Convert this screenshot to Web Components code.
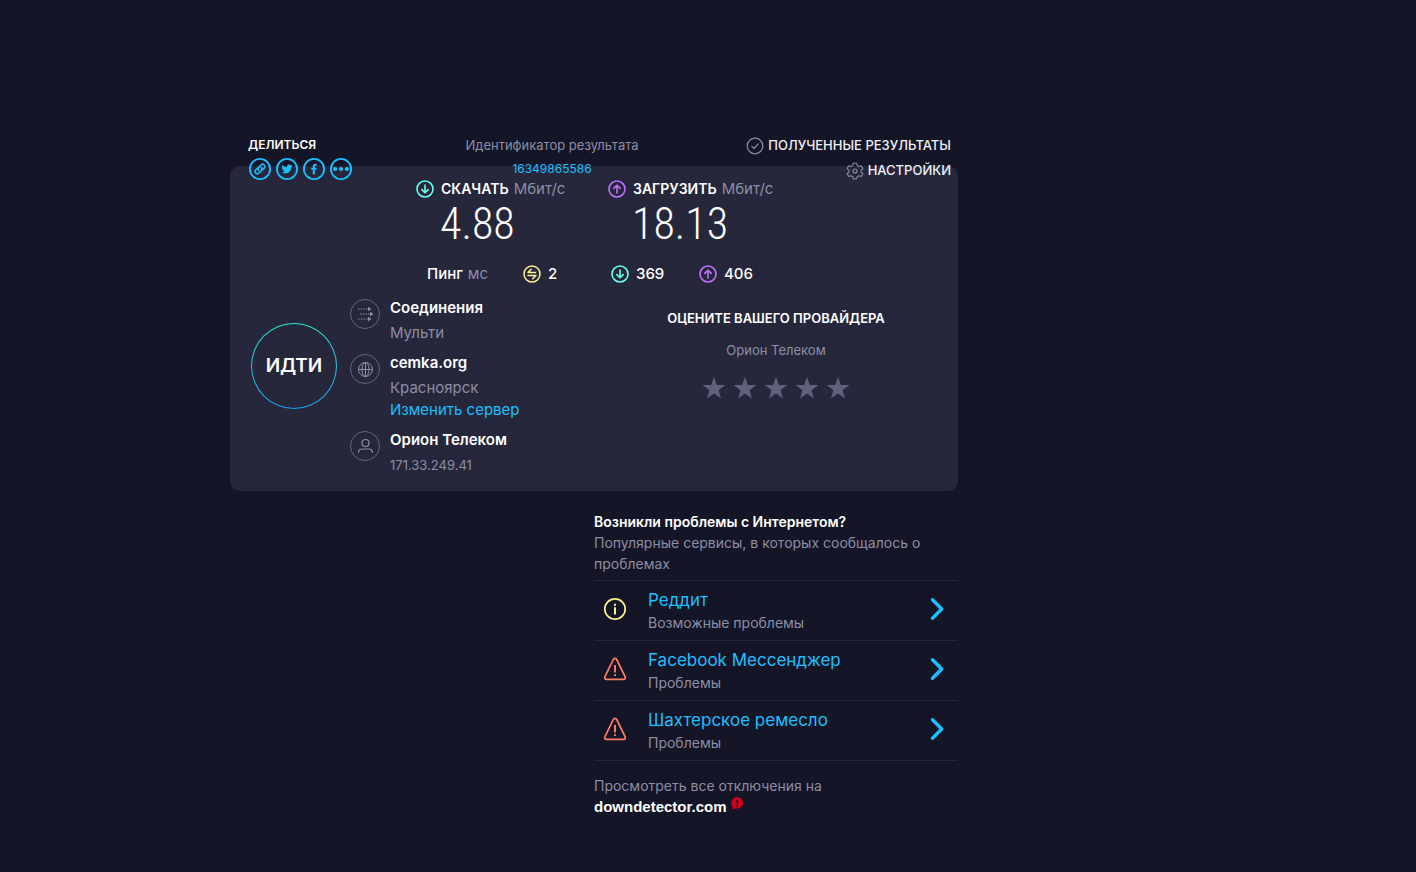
<!DOCTYPE html>
<html lang="ru">
<head>
<meta charset="utf-8">
<meta name="viewport" content="width=device-width, initial-scale=1">
<title>Speedtest</title>
<style>
  body {
    margin: 0;
    min-height: 100vh;
    background: #141526;
    color: #fff;
    font-family: Inter, "Open Sans", sans-serif;
    --card: #26273b;
    --muted: #8c8ea5;
    --link: #1cbfff;
    --down: #6afff3;
    --up: #bf71ff;
    --ping: #fff38e;
    --alert: #ff7e67;
  }
</style>
</head>
<body>
<speed-page></speed-page>

<script>
const ICONS = {
  link: ['0 0 24 24', '<g fill="none" stroke="currentColor"><circle cx="12" cy="12" r="11" stroke-width="2"/><g stroke-width="1.7" stroke-linecap="round"><path d="M10.6 13.6a2.4 2.4 0 0 1 0-3.4l2.5-2.6a2.4 2.4 0 0 1 3.5 3.4l-1.7 1.8"/><path d="M13.4 10.4a2.4 2.4 0 0 1 0 3.4l-2.5 2.6a2.4 2.4 0 0 1-3.5-3.4l1.7-1.8"/></g></g>'],
  twitter: ['0 0 24 24', '<circle cx="12" cy="12" r="11" fill="none" stroke="currentColor" stroke-width="2"/><path fill="currentColor" d="M18 8.2c-.5.2-.9.3-1.4.4.5-.3.9-.8 1.1-1.4-.5.3-1 .5-1.6.6a2.5 2.5 0 0 0-4.2 2.2c-2-.1-3.9-1.1-5.1-2.6-.6 1.100-.3 2.600.8 3.300-.4 0-.8-.1-1.100-.3 0 1.200.8 2.200 2 2.500-.4.1-.7.1-1.100 0 .3 1 1.200 1.700 2.300 1.700A5 5 0 0 1 6 15.700c4.800 2.900 10.900-.1 10.800-6.200.5-.4.9-.8 1.200-1.300z"/>'],
  facebook: ['0 0 24 24', '<circle cx="12" cy="12" r="11" fill="none" stroke="currentColor" stroke-width="2"/><path fill="currentColor" d="M10.700 18v-5.200H9v-2.100h1.700V9.200c0-1.900 1-2.800 2.700-2.800l1.500.1v1.900h-1c-.8 0-1 .4-1 1v1.300h2l-.3 2.100h-1.700V18z"/>'],
  more: ['0 0 24 24', '<circle cx="12" cy="12" r="11" fill="none" stroke="currentColor" stroke-width="2"/><g fill="currentColor"><circle cx="5.600" cy="12" r="2.300"/><circle cx="12" cy="12" r="2.300"/><circle cx="18.400" cy="12" r="2.300"/></g>'],
  check: ['0 0 18 18', '<g fill="none" stroke="currentColor" stroke-width="1.200"><circle cx="9" cy="9" r="7.800"/><path stroke-linecap="round" stroke-linejoin="round" d="M5.800 9.300l2.200 2.200 4.200-4.700"/></g>'],
  gear: ['0 0 18 18', '<g fill="none" stroke="currentColor" stroke-width="1.100" stroke-linejoin="round"><path d="M7.300 1.200h3.400l.5 2.300 1.700 1 2.300-.8 1.700 2.900-1.800 1.600v1.900l1.800 1.500-1.700 2.900-2.300-.7-1.700 1-.5 2.200H7.300l-.5-2.200-1.700-1-2.300.7-1.700-2.900 1.800-1.500V8.200L1.100 6.600l1.700-2.900 2.300.8 1.700-1z"/><circle cx="9" cy="9" r="2"/></g>'],
  down: ['0 0 18 18', '<g fill="none" stroke="currentColor" stroke-width="1.600"><circle cx="9" cy="9" r="8"/><path stroke-linecap="round" stroke-linejoin="round" d="M9 5v7.600M5.800 9.600L9 12.800l3.200-3.200"/></g>'],
  up: ['0 0 18 18', '<g fill="none" stroke="currentColor" stroke-width="1.600"><circle cx="9" cy="9" r="8"/><path stroke-linecap="round" stroke-linejoin="round" d="M9 13V5.400M5.800 8.400L9 5.200l3.200 3.200"/></g>'],
  ping: ['0 0 18 18', '<g fill="none" stroke="currentColor" stroke-width="1.500"><circle cx="9" cy="9" r="8"/><path stroke-linejoin="round" stroke-linecap="round" d="M8.200 4.300L5 7.400h7.500M5 10.400h8l-3.300 3.300"/></g>'],
  multi: ['0 0 30 30', '<g fill="none" stroke="currentColor"><circle cx="15" cy="15" r="14.500" opacity=".6"/><path stroke-width="1.200" stroke-dasharray="1.500 1.200" d="M8 10h11M10 15h11M8 20h11"/></g><g fill="currentColor"><path d="M18 7.700l3.500 2.300-3.500 2.300zM20 12.700l3.500 2.300-3.500 2.300zM18 17.700l3.500 2.300-3.500 2.300z"/></g>'],
  globe: ['0 0 30 30', '<g fill="none" stroke="currentColor"><circle cx="15" cy="15" r="14.500" opacity=".6"/><circle cx="15.500" cy="15.500" r="7"/><ellipse cx="15.500" cy="15.500" rx="3.500" ry="7"/><path d="M8.500 15.500h14M15.500 8.500v14"/></g>'],
  person: ['0 0 30 30', '<g fill="none" stroke="currentColor"><circle cx="15" cy="15" r="14.500" opacity=".6"/><g stroke-width="1.200" stroke-linecap="round"><circle cx="15.500" cy="12" r="3.500"/><path d="M8.500 21.500c0-2.500 1.500-3.500 4-3.500h6c2.500 0 4 1 4 3.500"/></g></g>'],
  star: ['0 0 24 24', '<path fill="currentColor" d="M12 .8l2.800 8.100 8.600.2-6.800 5.200 2.400 8.200-7-4.900-7 4.900 2.400-8.200L.6 9.100l8.600-.2z"/>'],
  info: ['0 0 24 24', '<circle cx="12" cy="12" r="10.200" fill="none" stroke="currentColor" stroke-width="1.700"/><path fill="none" stroke="currentColor" stroke-width="2" d="M12 10.300V17.500M12 6.700v2"/>'],
  warn: ['0 0 24 24', '<path fill="none" stroke="currentColor" stroke-width="1.700" stroke-linejoin="round" d="M10.300 2.500a1.900 1.900 0 0 1 3.400 0l8.500 17.400a1.700 1.700 0 0 1-1.500 2.400H3.300a1.700 1.700 0 0 1-1.500-2.400z"/><path fill="none" stroke="currentColor" stroke-width="1.900" d="M12 8v7.500M12 17.200v1.900"/>'],
  chevron: ['0 0 24 24', '<path fill="none" stroke="currentColor" stroke-width="3.400" stroke-linecap="round" stroke-linejoin="round" d="M7.500 2.700L16.700 12 7.500 21.300"/>'],
  badge: ['0 0 14 14', '<path fill="#d0021b" d="M7 1a6 5.800 0 1 1-1.500 11.400L1.800 13.300l.9-2.600A5.900 5.900 0 0 1 7 1z"/><path fill="none" stroke="#141526" stroke-width="1.800" d="M7.200 3v4.700M7.200 9v1.800"/>']
};

const define = (name, css, html) => customElements.define(name, class extends HTMLElement {
  constructor() {
    super();
    const template = document.createElement('template');
    template.innerHTML = `<style>*{box-sizing:border-box}${css}</style>${typeof html === 'function' ? html(this) : html}`;
    this.attachShadow({ mode: 'open' }).append(template.content.cloneNode(true));
  }
});

customElements.define('ui-icon', class extends HTMLElement {
  connectedCallback() {
    if (this.shadowRoot) return;
    const [box, body] = ICONS[this.getAttribute('name')];
    this.attachShadow({ mode: 'open' }).innerHTML = `
      <style>:host{display:block;flex:none;width:var(--size,18px);height:var(--size,18px)}svg{display:block;width:100%;height:100%}</style>
      <svg viewBox="${box}" aria-hidden="true">${body}</svg>`;
  }
});

define('share-bar', `
  :host { display: block; }
  h2 { margin: 0; font-size: 12px; line-height: 24px; font-weight: 600; }
  div { display: flex; gap: 3px; }
  button { display: grid; place-items: center; width: 24px; height: 24px; padding: 0; border: 0; background: none; color: var(--link); --size: 22px; cursor: pointer; }
`, `<h2>ДЕЛИТЬСЯ</h2>
  <div>
    <button aria-label="Копировать ссылку"><ui-icon name="link"></ui-icon></button>
    <button aria-label="Twitter"><ui-icon name="twitter"></ui-icon></button>
    <button aria-label="Facebook"><ui-icon name="facebook"></ui-icon></button>
    <button aria-label="Ещё"><ui-icon name="more"></ui-icon></button>
  </div>`);

define('result-id', `
  :host { display: block; text-align: center; line-height: 24px; }
  span, a { display: block; }
  span { font-size: 13px; color: var(--muted); }
  a { font-size: 12px; color: var(--link); text-decoration: none; }
`, `<span>Идентификатор результата</span><a href="#result"><slot></slot></a>`);

define('top-links', `
  :host { display: grid; justify-items: end; }
  a { display: flex; align-items: center; gap: 4px; font-size: 13px; line-height: 25px; font-weight: 500; color: #f0f0f6; text-decoration: none; white-space: nowrap; }
  ui-icon { color: var(--muted); }
`, `<a href="#results"><ui-icon name="check"></ui-icon>ПОЛУЧЕННЫЕ РЕЗУЛЬТАТЫ</a>
  <a href="#settings"><ui-icon name="gear"></ui-icon>НАСТРОЙКИ</a>`);

define('speed-value', `
  :host { display: block; }
  h3 { display: flex; align-items: center; margin: 0; font-size: 14px; line-height: 24px; font-weight: 600; white-space: nowrap; }
  ui-icon { margin-right: 7px; color: var(--tone); }
  small { margin-left: 5px; font-size: 15px; font-weight: 400; color: var(--muted); }
  p { margin: 0 0 0 24px; font: 300 44px/46px "Roboto Condensed", Roboto, sans-serif; }
`, host => `<h3><ui-icon name="${host.getAttribute('icon')}"></ui-icon><slot name="label"></slot><small>Мбит/с</small></h3><p><slot></slot></p>`);

define('ping-row', `
  :host { display: grid; grid-template-columns: 96px 88px 88px 88px; align-items: center; font-size: 15px; line-height: 24px; font-weight: 500; }
  span { display: flex; align-items: center; gap: 7px; }
  .label { gap: 5px; }
  small { font-size: 15px; font-weight: 400; color: var(--muted); }
  .ping ui-icon { color: var(--ping); }
  .down ui-icon { color: var(--down); }
  .up ui-icon { color: var(--up); }
`, `<span class="label">Пинг <small>мс</small></span>
  <span class="ping"><ui-icon name="ping"></ui-icon>2</span>
  <span class="down"><ui-icon name="down"></ui-icon>369</span>
  <span class="up"><ui-icon name="up"></ui-icon>406</span>`);

define('go-button', `
  :host { display: block; }
  button { width: 86px; height: 86px; padding: 0; border: 1px solid transparent; border-radius: 50%; color: #fff; font: 600 19px/24px Inter, sans-serif; cursor: pointer;
    background: linear-gradient(var(--card), var(--card)) padding-box, linear-gradient(#2ee6c8, #1ca0f0) border-box; }
`, `<button><slot></slot></button>`);

define('connection-item', `
  :host { display: grid; grid-template-columns: 30px 1fr; column-gap: 10px; font-size: 15px; line-height: 22px; color: var(--muted); }
  h3 { margin: 0; font-size: 15px; line-height: 28px; font-weight: 600; color: #fff; }
  ::slotted(*) { display: block; }
`, `<slot name="icon"></slot><div><h3><slot name="title"></slot></h3><slot></slot></div>`);

define('connection-list', `
  :host { display: grid; gap: 5px; }
  connection-item ui-icon { --size: 30px; margin-top: 5px; color: var(--muted); }
  a { color: var(--link); text-decoration: none; }
  .ip { font-size: 13px; }
`, `
  <connection-item><ui-icon slot="icon" name="multi"></ui-icon><span slot="title">Соединения</span><span>Мульти</span></connection-item>
  <connection-item><ui-icon slot="icon" name="globe"></ui-icon><span slot="title">cemka.org</span><span>Красноярск</span><a href="#servers">Изменить сервер</a></connection-item>
  <connection-item><ui-icon slot="icon" name="person"></ui-icon><span slot="title">Орион Телеком</span><span class="ip">171.33.249.41</span></connection-item>`);

define('provider-rating', `
  :host { display: block; padding-top: 12px; text-align: center; font-size: 13px; }
  h3 { margin: 0; font-size: 13px; line-height: 24px; font-weight: 600; }
  p { margin: 8px 0 14px; line-height: 24px; color: var(--muted); }
  div { display: flex; justify-content: center; gap: 7px; }
  button { padding: 0; border: 0; background: none; color: #5f6179; --size: 24px; cursor: pointer; }
`, `<h3>ОЦЕНИТЕ ВАШЕГО ПРОВАЙДЕРА</h3><p><slot></slot></p>
  <div>${[1, 2, 3, 4, 5].map(n => `<button aria-label="Оценка ${n}"><ui-icon name="star"></ui-icon></button>`).join('')}</div>`);

define('result-card', `
  :host { display: block; padding: 11px 0 15px; border-radius: 10px; background: var(--card); }
  .speeds { display: grid; grid-template-columns: 192px 192px; padding-left: 186px; }
  .down { --tone: var(--down); }
  .up { --tone: var(--up); }
  ping-row { margin: 15px 0 8px 197px; }
  .body { display: grid; grid-template-columns: 1fr 1fr; }
  .left { display: grid; grid-template-columns: 86px 1fr; gap: 13px; padding-left: 21px; }
  go-button { margin-top: 29px; }
`, `<div class="speeds">
    <speed-value class="down" icon="down"><span slot="label">СКАЧАТЬ</span>4.88</speed-value>
    <speed-value class="up" icon="up"><span slot="label">ЗАГРУЗИТЬ</span>18.13</speed-value>
  </div>
  <ping-row></ping-row>
  <div class="body">
    <div class="left"><go-button>ИДТИ</go-button><connection-list></connection-list></div>
    <provider-rating>Орион Телеком</provider-rating>
  </div>`);

define('outage-item', `
  :host { display: grid; grid-template-columns: 54px 1fr 24px; align-items: start; padding: 7px 9px 6px 0; border-top: 1px solid var(--card); }
  ui-icon { --size: 24px; margin-top: 9px; }
  .state { margin-left: 9px; color: var(--tone); }
  a { display: block; font-size: 17px; line-height: 24px; color: var(--link); text-decoration: none; }
  small { display: block; font-size: 14px; line-height: 22px; color: var(--muted); }
  .go { color: var(--link); }
`, host => `<ui-icon class="state" name="${host.getAttribute('icon')}"></ui-icon>
  <div><a href="#status"><slot></slot></a><small><slot name="state"></slot></small></div>
  <ui-icon class="go" name="chevron"></ui-icon>`);

define('outage-panel', `
  :host { display: block; font-size: 14px; line-height: 21px; color: var(--muted); }
  h2 { margin: 0; font-size: 14px; line-height: 21px; font-weight: 600; color: #fff; }
  p { margin: 0; }
  .list { margin: 6px 0 14px; border-bottom: 1px solid var(--card); }
  .info { --tone: var(--ping); }
  .warn { --tone: var(--alert); }
  a { display: flex; align-items: center; gap: 3px; color: #fff; font: 700 15px/21px "Liberation Sans", Arial, sans-serif; text-decoration: none; }
  a ui-icon { --size: 14px; align-self: start; }
`, `<h2>Возникли проблемы с Интернетом?</h2>
  <p>Популярные сервисы, в которых сообщалось о проблемах</p>
  <div class="list">
    <outage-item class="info" icon="info">Реддит<span slot="state">Возможные проблемы</span></outage-item>
    <outage-item class="warn" icon="warn">Facebook Мессенджер<span slot="state">Проблемы</span></outage-item>
    <outage-item class="warn" icon="warn">Шахтерское ремесло<span slot="state">Проблемы</span></outage-item>
  </div>
  <p>Просмотреть все отключения на</p>
  <a href="#downdetector">downdetector.com<ui-icon name="badge"></ui-icon></a>`);

define('speed-page', `
  :host { display: grid; grid-template-columns: 230fr minmax(728px, 728fr) 458fr; padding: 133px 0 48px; }
  main { grid-column: 2; }
  header { position: relative; z-index: 1; display: grid; grid-template-columns: 200px 244px 1fr; padding: 0 7px 0 0; margin-bottom: -17px; }
  share-bar { padding-left: 18px; }
  outage-panel { width: 50%; margin: 20px 0 0 auto; }
`, `<main>
    <header><share-bar></share-bar><result-id>16349865586</result-id><top-links></top-links></header>
    <result-card></result-card>
    <outage-panel></outage-panel>
  </main>`);
</script>
</body>
</html>
